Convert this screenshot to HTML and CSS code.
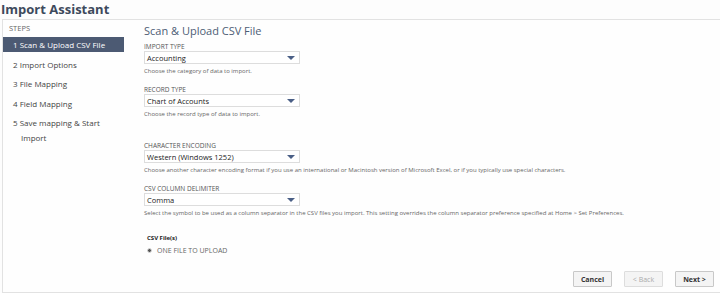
FILE: index.html
```html
<!DOCTYPE html>
<html lang="en">
  <head>
    <meta charset="UTF-8" />
    <title>Import Assistant</title>
    <link rel="stylesheet" href="styles.css">
  </head>
  <body>
    <h1 class="page-title">Import Assistant</h1>
    <div class="frame">
      <aside class="steps">
        <div class="steps-head">STEPS</div>
        <ul class="step-list">
          <li class="step active">1 Scan &amp; Upload CSV File</li>
          <li class="step">2 Import Options</li>
          <li class="step">3 File Mapping</li>
          <li class="step">4 Field Mapping</li>
          <li class="step">5 Save mapping &amp; Start<br><span class="wrap">Import</span></li>
        </ul>
      </aside>

      <main class="panel">
        <h2 class="panel-title">Scan &amp; Upload CSV File</h2>

        <div class="field">
          <label>IMPORT TYPE</label>
          <div class="select"><span>Accounting</span><i class="caret"></i></div>
          <p class="help">Choose the category of data to import.</p>
        </div>

        <div class="field">
          <label>RECORD TYPE</label>
          <div class="select"><span>Chart of Accounts</span><i class="caret"></i></div>
          <p class="help">Choose the record type of data to import.</p>
        </div>

        <div class="field spaced">
          <label>CHARACTER ENCODING</label>
          <div class="select"><span>Western (Windows 1252)</span><i class="caret"></i></div>
          <p class="help">Choose another character encoding format if you use an international or Macintosh version of Microsoft Excel, or if you typically use special characters.</p>
        </div>

        <div class="field">
          <label>CSV COLUMN DELIMITER</label>
          <div class="select"><span>Comma</span><i class="caret"></i></div>
          <p class="help">Select the symbol to be used as a column separator in the CSV files you import. This setting overrides the column separator preference specified at Home &gt; Set Preferences.</p>
        </div>

        <div class="files">
          <div class="files-head">CSV File(s)</div>
          <div class="radio"><i class="dot"></i>ONE FILE TO UPLOAD</div>
        </div>

        <div class="actions">
          <button>Cancel</button>
          <button disabled>&lt; Back</button>
          <button>Next &gt;</button>
        </div>
      </main>
    </div>
  </body>
</html>
```

FILE: styles.css
```css
body {
  margin: 0;
  background-color: #fdfdfd;
  font-family: "Open Sans", "Liberation Sans", sans-serif;
  color: #333;
  height: 293px;
  overflow: hidden;
}

.page-title {
  margin: 0 0 0 1px;
  height: 19px;
  font-size: 13px;
  font-weight: bold;
  color: #3d4a5c;
  line-height: 18px;
}

.frame {
  display: flex;
  margin-left: 2px;
  height: 272px;
  border: 1px solid #e2e2e2;
  border-right: none;
  background-color: #fefefe;
}

.steps {
  width: 126px;
  flex-shrink: 0;
}

.steps-head {
  padding: 3px 0 0 6px;
  height: 12px;
  font-size: 7.5px;
  color: #666;
}

.step-list {
  list-style: none;
  margin: 2px 0 0;
  padding: 0;
}

.step {
  width: 111px;
  padding: 2px 0 0 10px;
  height: 13px;
  margin-bottom: 4.5px;
  font-size: 8px;
  color: #444;
}

.step.active {
  background-color: #4c5a73;
  color: #fff;
}

.step .wrap {
  display: inline-block;
  margin: 4px 0 0 8px;
}

.panel {
  flex: 1;
  display: flex;
  flex-direction: column;
  padding-left: 15px;
}

.panel-title {
  margin: 3px 0 0;
  font-size: 11px;
  font-weight: normal;
  color: #4d5d75;
  line-height: 16px;
}

.field {
  margin-top: 3px;
}

.field.spaced {
  margin-top: 16px;
}

.field label {
  display: block;
  font-size: 6.5px;
  color: #555;
  line-height: 9px;
}

.select {
  display: flex;
  align-items: center;
  justify-content: space-between;
  width: 148px;
  height: 11px;
  padding: 0 4px 0 2px;
  border: 1px solid #ddd;
  background-color: #fff;
  font-size: 7.5px;
  color: #222;
}

.caret {
  width: 0;
  height: 0;
  border-left: 4px solid transparent;
  border-right: 4px solid transparent;
  border-top: 4px solid #4a5f86;
}

.help {
  margin: 3px 0 7px;
  font-size: 6px;
  color: #666;
  line-height: 8px;
}

.files {
  margin: 10px 0 0 3px;
}

.files-head {
  font-size: 6px;
  font-weight: bold;
  color: #222;
  line-height: 9px;
}

.radio {
  display: flex;
  align-items: center;
  margin-top: 3px;
  font-size: 7px;
  color: #666;
}

.dot {
  width: 3px;
  height: 3px;
  margin-right: 5px;
  border: 1.5px solid #ddd;
  border-radius: 50%;
  background-color: #555;
}

.actions {
  display: flex;
  justify-content: flex-end;
  gap: 12px;
  margin-top: auto;
  padding: 0 6px 5px 0;
}

.actions button {
  width: 39px;
  height: 16px;
  padding: 0;
  border: 1px solid #c8c8c8;
  border-radius: 1px;
  background-color: #f4f4f4;
  font-family: "Open Sans", "Liberation Sans", sans-serif;
  font-size: 7px;
  font-weight: bold;
  color: #333;
}

.actions button:disabled {
  color: #aaa;
  font-weight: normal;
  border-color: #ddd;
}
```
